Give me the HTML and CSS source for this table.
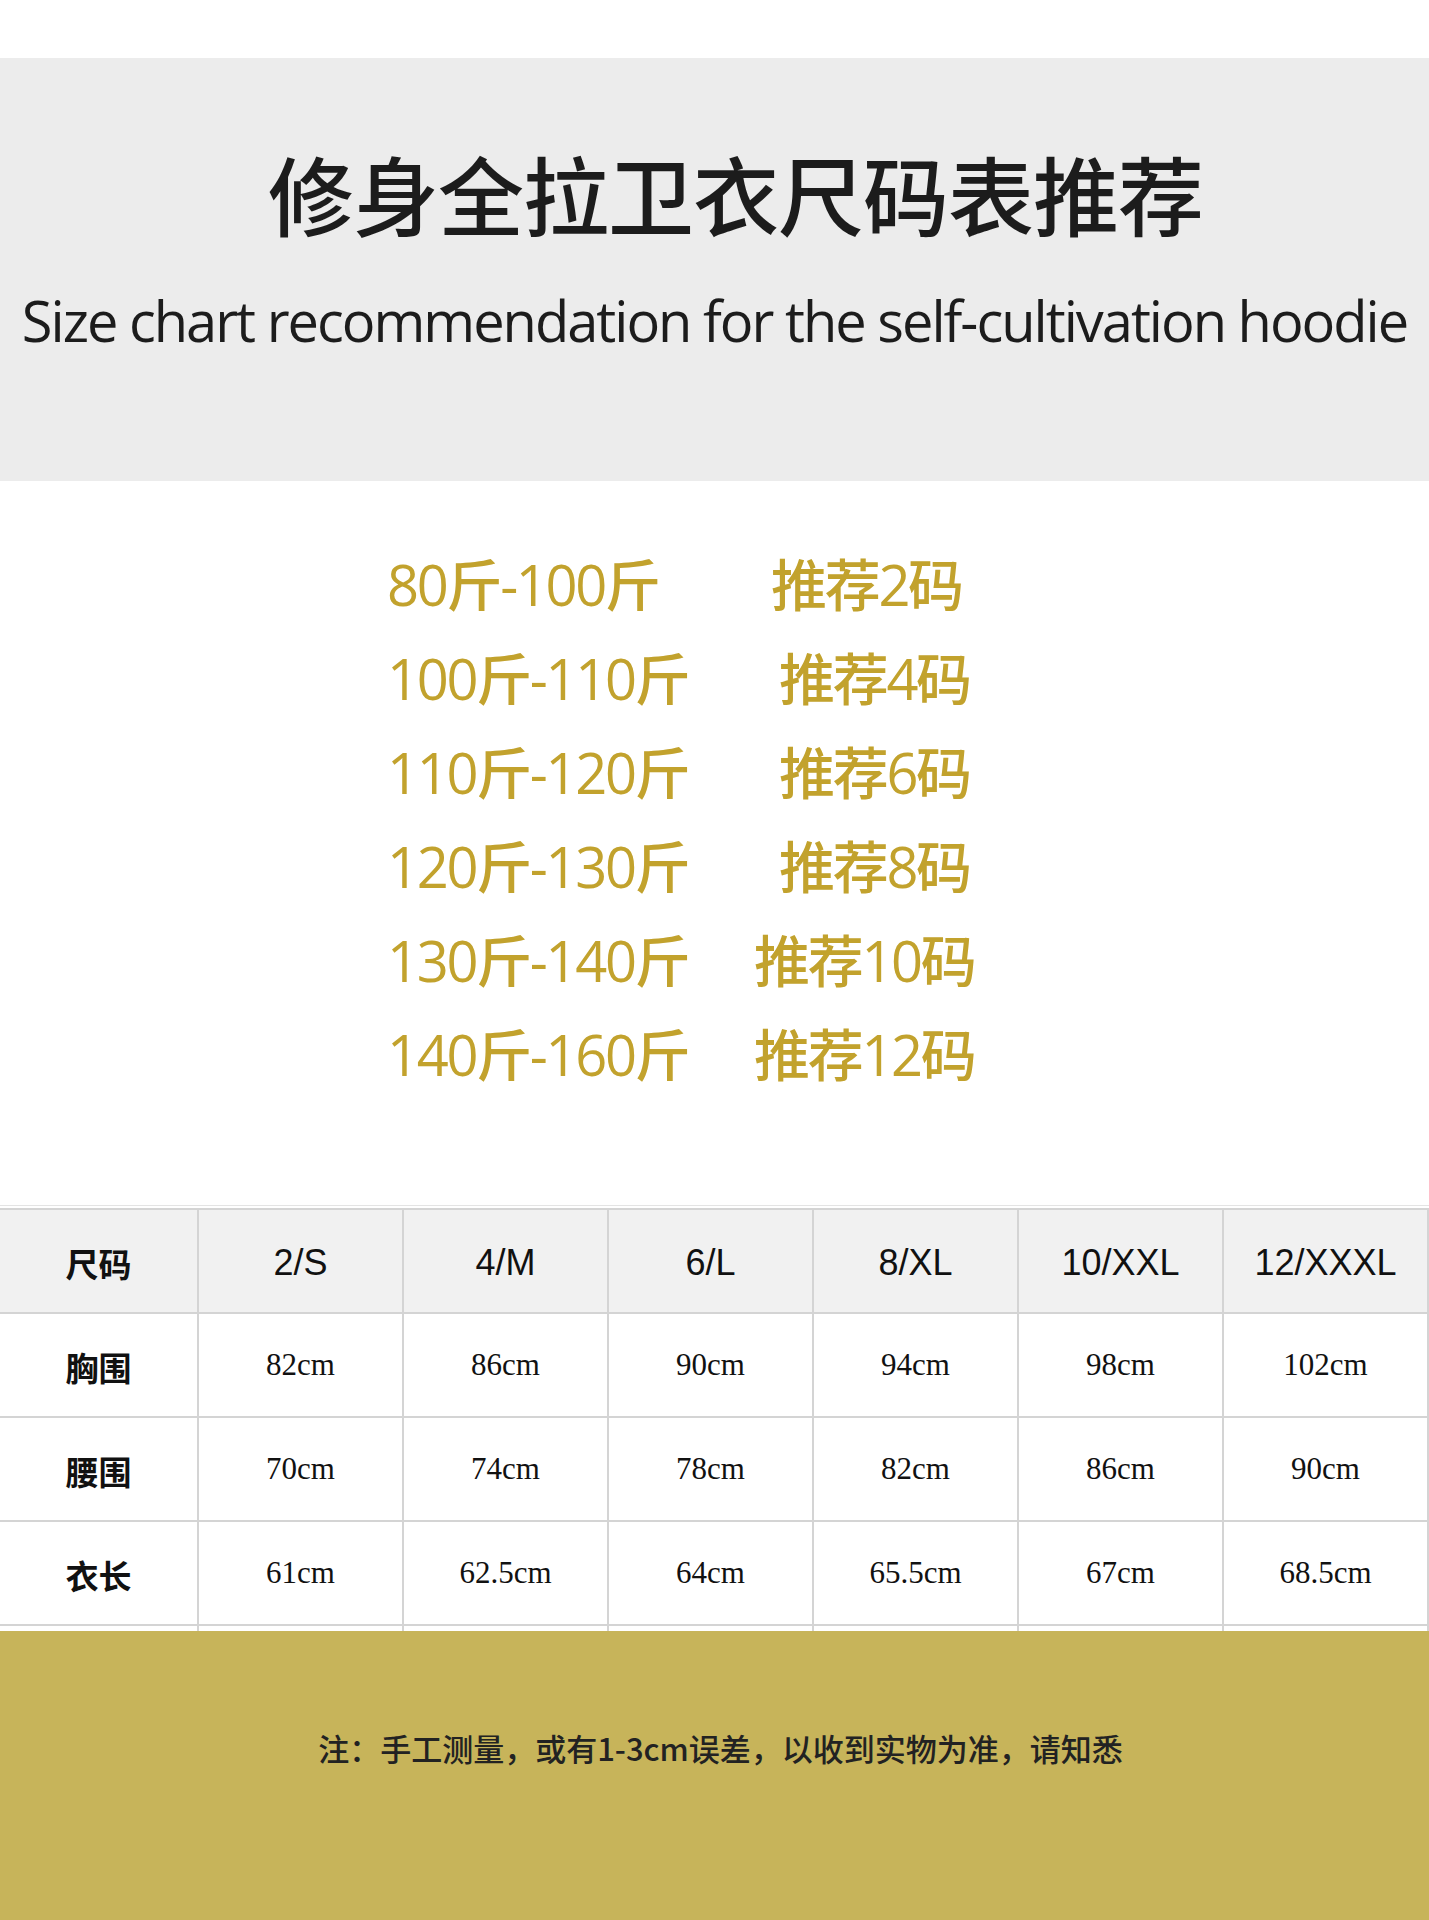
FILE: index.html
```html
<!DOCTYPE html>
<html lang="zh-CN">
<head>
<meta charset="utf-8">
<title>修身全拉卫衣尺码表推荐</title>
<link rel="stylesheet" href="styles.css">
</head>
<body>
<div class="page">
  <header class="hero">
    <h1 class="title">修身全拉卫衣尺码表推荐</h1>
    <p class="subtitle">Size chart recommendation for the self-cultivation hoodie</p>
  </header>

  <section class="recs">
    <div class="rec rec-first"><span class="range">80斤-100斤</span><span class="size">推荐2码</span></div>
    <div class="rec"><span class="range">100斤-110斤</span><span class="size">推荐4码</span></div>
    <div class="rec"><span class="range">110斤-120斤</span><span class="size">推荐6码</span></div>
    <div class="rec"><span class="range">120斤-130斤</span><span class="size">推荐8码</span></div>
    <div class="rec rec-wide"><span class="range">130斤-140斤</span><span class="size">推荐10码</span></div>
    <div class="rec rec-wide"><span class="range">140斤-160斤</span><span class="size">推荐12码</span></div>
  </section>

  <section class="chart">
    <table class="sizes">
      <colgroup>
        <col class="c-first">
        <col class="c-size"><col class="c-size"><col class="c-size">
        <col class="c-size"><col class="c-size"><col class="c-size">
      </colgroup>
      <thead>
        <tr class="head">
          <th class="lbl">尺码</th>
          <th>2/S</th><th>4/M</th><th>6/L</th><th>8/XL</th><th>10/XXL</th><th>12/XXXL</th>
        </tr>
      </thead>
      <tbody>
        <tr>
          <td class="lbl">胸围</td>
          <td>82cm</td><td>86cm</td><td>90cm</td><td>94cm</td><td>98cm</td><td>102cm</td>
        </tr>
        <tr>
          <td class="lbl">腰围</td>
          <td>70cm</td><td>74cm</td><td>78cm</td><td>82cm</td><td>86cm</td><td>90cm</td>
        </tr>
        <tr>
          <td class="lbl">衣长</td>
          <td>61cm</td><td>62.5cm</td><td>64cm</td><td>65.5cm</td><td>67cm</td><td>68.5cm</td>
        </tr>
        <tr class="stub">
          <td></td><td></td><td></td><td></td><td></td><td></td><td></td>
        </tr>
      </tbody>
    </table>
  </section>

  <footer class="note">
    <p>注：手工测量，或有1-3cm误差，以收到实物为准，请知悉</p>
  </footer>
</div>
</body>
</html>
```

FILE: styles.css
```css
html, body {
  margin: 0;
  padding: 0;
  background: #ffffff;
}

.page {
  width: 1429px;
  height: 1920px;
  overflow: hidden;
  display: flex;
  flex-direction: column;
  padding-top: 58px;
  box-sizing: border-box;
}

/* ---------- hero ---------- */
.hero {
  background: #ececec;
  height: 423px;
  box-sizing: border-box;
  padding-top: 92px;
  display: flex;
  flex-direction: column;
  align-items: center;
}

.title {
  margin: 0 0 0 42px;
  font-family: "Noto Sans CJK SC", "Noto Sans", sans-serif;
  font-weight: 500;
  font-size: 86px;
  line-height: 1;
  letter-spacing: -1px;
  color: #1c1c1c;
  white-space: nowrap;
}

.subtitle {
  margin: 56px 0 0;
  font-family: "Open Sans", "Noto Sans", sans-serif;
  font-weight: 500;
  font-size: 56px;
  line-height: 1;
  letter-spacing: -2px;
  color: #1c1c1c;
  white-space: nowrap;
}

/* ---------- recommendations ---------- */
.recs {
  padding: 56px 0 104px 387px;
  display: flex;
  flex-direction: column;
}

.rec {
  display: flex;
  height: 94px;
  line-height: 94px;
  font-family: "Open Sans", "Noto Sans CJK SC", sans-serif;
  font-weight: 500;
  font-size: 56px;
  letter-spacing: -2.3px;
  color: #c2a22d;
  white-space: nowrap;
}

.range {
  width: 392px;
  flex: none;
}

.size {
  flex: none;
}

.rec-first .size { margin-left: -8px; }
.rec-wide .size { margin-left: -25px; }

/* ---------- table ---------- */
.chart {
  border-top: 1px solid #e4e4e4;
  padding-top: 2px;
}

.sizes {
  width: 1429px;
  table-layout: fixed;
  border-collapse: separate;
  border-spacing: 0;
}

.c-first { width: 199px; }
.c-size { width: 205px; }

.sizes th,
.sizes td {
  padding: 0;
  text-align: center;
  vertical-align: middle;
  border-right: 2px solid #d4d4d4;
  border-bottom: 2px solid #d4d4d4;
  height: 102px;
}

.sizes .head th {
  background: #f1f1f1;
  border-top: 2px solid #d4d4d4;
  font-family: "Liberation Sans", Arial, sans-serif;
  font-weight: 400;
  font-size: 36px;
  color: #111;
  padding-top: 4px;
  height: 98px;
}

.sizes td {
  font-family: "Liberation Serif", "Times New Roman", serif;
  font-size: 31px;
  color: #111;
}

.sizes .lbl,
.sizes .head .lbl {
  font-family: "Noto Sans CJK SC", sans-serif;
  font-weight: 700;
  font-size: 33px;
  color: #111;
  padding-top: 4px;
}

.sizes tbody .lbl {
  height: 98px;
}

.sizes .stub td {
  height: 5px;
  border-bottom: none;
}

/* ---------- note ---------- */
.note {
  flex: 1;
  background: #c7b45a;
  padding: 101px 0 0 12px;
  text-align: center;
}

.note p {
  margin: 0;
  font-family: "Noto Sans CJK SC", sans-serif;
  font-weight: 500;
  font-size: 31px;
  line-height: 1;
  color: #222;
}
```
